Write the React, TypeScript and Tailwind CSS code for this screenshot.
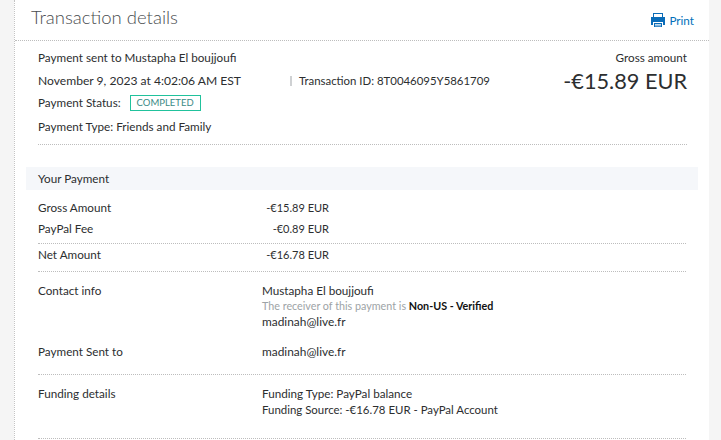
const font = { fontFamily: "Lato, 'Liberation Sans', sans-serif" };

function Row({ label, value, className = "" }: { label: string; value: string; className?: string }) {
  return (
    <div className={`flex h-[16px] items-baseline ${className}`}>
      <span className="w-[224px]">{label}</span>
      <span className="w-[67px] whitespace-nowrap text-right text-[11px]">{value}</span>
    </div>
  );
}

export default function App() {
  return (
    <div className="h-[440px] w-[721px] overflow-hidden bg-[#f5f5f5] pl-[14px] pr-[12px] text-[11.7px] leading-[16px] text-[#2c2e2f]" style={font}>
      <div className="h-full border-l border-dotted border-[#c4c4c4] bg-white">
        <header className="flex h-[41px] items-center justify-between border-b border-dotted border-[#bdbdbd] pl-[16px] pr-[15px]">
          <h1 className="mt-[-6px] text-[18.5px] font-light leading-[28px] text-[#4a4d4f]">Transaction details</h1>
          <a className="flex items-center gap-[3px] text-[#0070ba]">
            <svg width="16" height="16" viewBox="0 0 16 16" fill="#0a6cb8" aria-hidden="true">
              <path d="M3 1h10v4h-1V2H4v3H3z" />
              <path d="M1 5h14v8h-2v-3H3v3H1z" />
              <path d="M4 11h8v4H4zM5 12v.8h6V12zM5 13.4v.8h6v-.8z" fillRule="evenodd" />
            </svg>
            <span>Print</span>
          </a>
        </header>

        <section className="ml-[23px] mr-[22px] flex h-[104px] justify-between border-b border-dotted border-[#bdbdbd] pt-[8px]">
          <div className="flex flex-col">
            <p>Payment sent to Mustapha El boujjoufi</p>
            <div className="mt-[8px] flex items-center">
              <span className="w-[252px] text-[12.1px]">November 9, 2023 at 4:02:06 AM EST</span>
              <span className="mr-[7px] h-[10px] w-[2px] bg-[#cfd1d3]" />
              <span className="text-[11.4px]">Transaction ID: 8T0046095Y5861709</span>
            </div>
            <div className="mt-[5px] flex items-start">
              <span>Payment Status:</span>
              <span className="ml-[9px] mt-[1px] flex h-[16px] w-[71px] items-center justify-center border border-[#21c29c] text-[9.5px] text-[#3a8a86]">COMPLETED</span>
            </div>
            <p className="mt-[7px]">Payment Type: Friends and Family</p>
          </div>
          <div className="flex flex-col items-end">
            <p>Gross amount</p>
            <p className="mt-[2px] text-[21.7px] leading-[28px]">-€15.89 EUR</p>
          </div>
        </section>

        <div className="mx-[11px] mt-[22px] flex h-[23px] items-center bg-[#f5f7fa] pb-[2px] pl-[12px]">Your Payment</div>

        <div className="mx-[23px] mt-[9px]">
          <Row label="Gross Amount" value="-€15.89 EUR" />
          <Row label="PayPal Fee" value="-€0.89 EUR" className="mt-[5px]" />
          <div className="mt-[7px] border-b border-dotted border-[#bdbdbd]" />
          <Row label="Net Amount" value="-€16.78 EUR" className="mt-[2px]" />
          <div className="mt-[9px] border-b border-dotted border-[#bdbdbd]" />

          <div className="mt-[10px] flex">
            <span className="w-[224px]">Contact info</span>
            <div>
              <p>Mustapha El boujjoufi</p>
              <p className="text-[10.75px] text-[#9da3a6]">The receiver of this payment is <b className="font-bold text-[#111]">Non-US - Verified</b></p>
              <p className="text-[11.9px]">madinah@live.fr</p>
            </div>
          </div>
          <div className="mt-[13px] flex h-[16px] items-baseline">
            <span className="w-[224px]">Payment Sent to</span>
            <span className="text-[11.9px]">madinah@live.fr</span>
          </div>
          <div className="mt-[15px] border-b border-dotted border-[#bdbdbd]" />
          <div className="mt-[10px] flex">
            <span className="w-[224px]">Funding details</span>
            <div>
              <p>Funding Type: PayPal balance</p>
              <p className="mt-[1px] text-[11.45px]">Funding Source: -€16.78 EUR - PayPal Account</p>
            </div>
          </div>
          <div className="mt-[20px] border-b border-dotted border-[#bdbdbd]" />
        </div>
      </div>
    </div>
  );
}
